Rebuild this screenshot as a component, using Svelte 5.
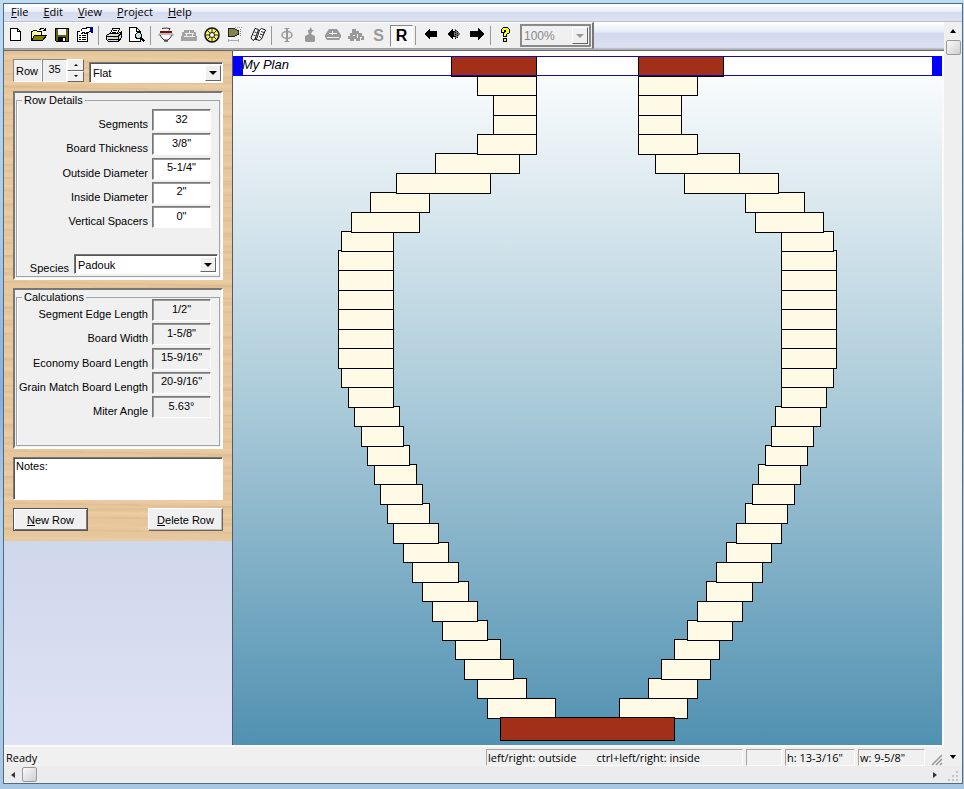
<script lang="ts">
	let row = 35;
	let species = 'Padouk';
	let notes = 'Notes:';

	const menus = ['File', 'Edit', 'View', 'Project', 'Help'];

	const details = [
		{ id: 'segments', label: 'Segments', value: '32' },
		{ id: 'thickness', label: 'Board Thickness', value: '3/8"' },
		{ id: 'outside', label: 'Outside Diameter', value: '5-1/4"' },
		{ id: 'inside', label: 'Inside Diameter', value: '2"' },
		{ id: 'spacers', label: 'Vertical Spacers', value: '0"' }
	];

	const calculations = [
		{ id: 'edge', label: 'Segment Edge Length', value: '1/2"' },
		{ id: 'width', label: 'Board Width', value: '1-5/8"' },
		{ id: 'economy', label: 'Economy Board Length', value: '15-9/16"' },
		{ id: 'grain', label: 'Grain Match Board Length', value: '20-9/16"' },
		{ id: 'miter', label: 'Miter Angle', value: '5.63°' }
	];

	// [outside radius, inside radius] of every ring, top row first
	const radii = [
		[136, 51], [110, 51], [94, 51], [94, 51], [110, 51], [152, 68], [191, 97],
		[217, 158], [236, 168], [246, 194], [249, 194], [249, 194], [249, 194],
		[249, 194], [249, 194], [249, 194], [246, 194], [239, 194], [233, 188],
		[226, 184], [220, 178], [213, 171], [207, 165], [200, 158], [194, 149],
		[184, 139], [175, 129], [165, 119], [155, 110], [145, 100], [132, 87],
		[123, 74], [110, 61], [100, 32]
	];

	const center = 354;
	const rowStep = 19.448;

	// drawn from the bottom up so each ring overlaps the one below
	const rings = radii
		.map(([outer, inner], i) => ({
			y: Math.round(56 + rowStep * i) - 51 + 0.5,
			left: center - outer + 0.5,
			right: center + inner + 0.5,
			width: outer - inner,
			dark: i === 0
		}))
		.reverse();
</script>

<div class="desktop">
	<div class="window">
		<nav class="menu">
			{#each menus as m}
				<button><u>{m[0]}</u>{m.slice(1)}</button>
			{/each}
		</nav>

		<div class="middle">
			<div class="main">
				<div class="toolbar">
					<div class="tools">
						<button aria-label="New">
							<svg viewBox="0 0 16 16"><path d="M2.500 1.500h7l3 3v9h-10z" fill="#fff" stroke="#000" /><path d="M9.500 1.500v3h3" fill="none" stroke="#000" /></svg>
						</button>
						<button aria-label="Open">
							<svg viewBox="0 0 16 16"><path d="M.5 13.500v-9h1l1-1h3l1 1h4v3" fill="#ffff9c" stroke="#000" /><path d="M.5 13.500l3-5h12l-4 5z" fill="#808000" stroke="#000" /><path d="M8.500 2.500l2-1h2l2 2M14.500 1v3M12 3.500h3" fill="none" stroke="#000" /></svg>
						</button>
						<button aria-label="Save">
							<svg viewBox="0 0 16 16"><path d="M1.500 1.500h13v13h-12l-1-1z" fill="#606010" stroke="#000" /><path d="M4 2h8v6H4z" fill="#f4f4f4" /><path d="M4 10h8v4H4z" fill="#000" /><path d="M9 11h2v3H9z" fill="#fff" /></svg>
						</button>
						<button aria-label="Properties">
							<svg viewBox="0 0 16 16"><path d="M.5 4.500h10v10H.5z" fill="#fff" stroke="#000" /><path d="M2 8.500h2M5 8.500h4M2 10.500h2M5 10.500h4M2 12.500h2M5 12.500h4" stroke="#000" /><path d="M3.500 4.500l2-3h3l2-1h3v4l-3 1-2 1-2-1-2 1" fill="#fff" stroke="#000" /><path d="M13 0h3v6h-2V5h-1z" fill="#000090" /></svg>
						</button>
						<span class="sep"></span>
						<button aria-label="Print">
							<svg viewBox="0 0 16 16"><path d="M4.500 6.500l2-5h7l-2 5" fill="#fff" stroke="#000" /><path d="M7 3.500h4M6 5.500h4" stroke="#000" /><path d="M.5 8.500l3-2h9l3-2v6l-3 4h-10l-2-2z" fill="#d8d8d8" stroke="#000" /><path d="M1 9.500h11l3-3M12.500 10v4M2 12.500h10" fill="none" stroke="#000" /><path d="M8 10.500h3" stroke="#d0d000" /></svg>
						</button>
						<button aria-label="Print preview">
							<svg viewBox="0 0 16 16"><path d="M.5.5h7l4 4v10H.5z" fill="#fff" stroke="#000" /><path d="M7.500.5v4h4" fill="none" stroke="#000" /><circle cx="9.500" cy="8.500" r="3" fill="#b9e4e4" stroke="#000" /><path d="M11.500 10.500l4 4" stroke="#000" stroke-width="2" /></svg>
						</button>
						<span class="sep"></span>
						<button aria-label="Bowl">
							<svg class="smooth" viewBox="0 0 16 16"><path d="M4 1.500q4-1 8 0l-1 2M2 8l2 3 2 2h4l2-2 2-3" fill="#fff" stroke="#333" /><path d="M1 8.500V7h14v1.500" fill="none" stroke="#888" /><path d="M2 4h12v2H2z" fill="#7c100c" /><path d="M6 14h4" stroke="#000" stroke-width="1" /></svg>
						</button>
						<button aria-label="Bricks" disabled>
							<svg viewBox="0 0 16 16"><path d="M3 3h10v2h2v4h1v5H0V9h1V5h2z" fill="#a3a3a3" /><path d="M4 6.500h9M3 9.500h11M8.500 4v3M5.500 7v3M11.500 7v3" stroke="#f0f0f0" /></svg>
						</button>
						<button aria-label="Ring">
							<svg class="smooth" viewBox="0 0 16 16"><circle cx="8" cy="8" r="7" fill="#f8f060" stroke="#111" stroke-width="1.500" /><path d="M8 1v14M1 8h14M3 3l10 10M13 3L3 13" stroke="#332" /><circle cx="8" cy="8" r="2.500" fill="#fff" stroke="#111" /></svg>
						</button>
						<button aria-label="Segment">
							<svg viewBox="0 0 16 16"><path d="M1.500 1.500h5l5 2v4l-5 2h-5z" fill="#84844a" stroke="#222" /><path d="M8 .5h8M13.500 2v8" stroke="#999" stroke-dasharray="1 1" /><path d="M1 13.500h11M1.500 12v3M11.500 12v3" stroke="#aaa" /></svg>
						</button>
						<button aria-label="Boards">
							<svg class="smooth" viewBox="0 0 16 16"><path d="M1 11L5 1.500l3.500 1L5 12l-2 1.500zM5 12l2-1 2.500-8 2-1.500 4 1.500-4 9-2 1.500L5 12" fill="#fff" stroke="#111" /><path d="M11 4.500l3 1M10 7l3 1M9 9.500l2 1M4.500 5l2 .5M3.500 8l2 .5" stroke="#222" /></svg>
						</button>
						<span class="sep"></span>
						<button aria-label="Diameter" disabled>
							<svg class="smooth" viewBox="0 0 16 16"><ellipse cx="8" cy="8" rx="5" ry="3.500" fill="none" stroke="#999" stroke-width="1.500" /><path d="M8 2v12" stroke="#999" stroke-width="2" /><path d="M5.500 1.500h5M5.500 14.500h5" stroke="#999" /></svg>
						</button>
						<button aria-label="Vessel" disabled>
							<svg class="smooth" viewBox="0 0 16 16"><path d="M9 0l1 3h2l-2 2-1 2 4 2v5l-1 1H4l-1-1V9l4-2-1-2V3h1z" fill="#999" /></svg>
						</button>
						<button aria-label="Lid" disabled>
							<svg class="smooth" viewBox="0 0 16 16"><path d="M4 2h8l2 3 2 3v2l-2 3H2l-2-3V8l2-3z" fill="#999" /><path d="M4 6.500h8M7.500 4v4M2 10.500h12" stroke="#f0f0f0" /></svg>
						</button>
						<button aria-label="Feature ring" disabled>
							<svg viewBox="0 0 16 16"><path d="M4 2h4v2h3v2h3v3h2v4h-3v-2h-1v3H8v-2H6v2H2v-2H0V9h2V6h2z" fill="#999" /><path d="M9.500 7v4M5 8.500h2M12 10.500h2" stroke="#f0f0f0" /></svg>
						</button>
						<button class="letter" disabled>S</button>
						<button class="letter pressed">R</button>
						<span class="sep"></span>
						<button aria-label="Previous">
							<svg viewBox="0 0 16 16"><path d="M1 7l6-6v3h7v6H7v3z" /></svg>
						</button>
						<button aria-label="Both ways">
							<svg viewBox="0 0 16 16"><path d="M1 7l6-6v3h2v6H7v3z" /><path d="M9 1l5 6-5 6V9H8V5h1z" fill="#777" /><path d="M9.500 3v9M11.500 4v7" stroke="#000" stroke-dasharray="1 1" /></svg>
						</button>
						<button aria-label="Next">
							<svg viewBox="0 0 16 16"><path d="M15 7L9 1v3H1v6h8v3z" /></svg>
						</button>
						<span class="sep"></span>
						<button aria-label="Help">
							<svg viewBox="0 0 16 16"><path d="M3.500 5.500v-3l2-2h4l2 2v3l-3 2v2h-3v-3l2-2v-1h-1v2zM5.500 11.500h3v3h-3z" fill="#ffff20" stroke="#000" /></svg>
						</button>
						<label class="combo zoom">
							<select disabled aria-label="Zoom"><option>100%</option></select>
							<span class="drop"></span>
						</label>
					</div>
				</div>

				<div class="workspace">
					<aside class="side">
						<div class="wood">
							<div class="row-line">
								<div class="row-box">
									<label for="row">Row</label>
									<input id="row" value={row} />
									<div class="spin">
										<button aria-label="Next row" on:click={() => row++}><i class="tri up"></i></button>
										<button aria-label="Previous row" on:click={() => row--}><i class="tri down"></i></button>
									</div>
								</div>
								<label class="combo kind">
									<select aria-label="Row type"><option>Flat</option></select>
									<span class="drop"></span>
								</label>
							</div>

							<div class="group">
								<fieldset>
									<legend>Row Details</legend>
									<div class="fields details">
										{#each details as f}
											<div class="field">
												<label for={f.id}>{f.label}</label>
												<input id={f.id} value={f.value} />
											</div>
										{/each}
									</div>
									<div class="species">
										<label for="species">Species</label>
										<div class="combo">
											<select id="species" bind:value={species}><option>Padouk</option></select>
											<span class="drop"></span>
										</div>
									</div>
								</fieldset>
							</div>

							<div class="group">
								<fieldset>
									<legend>Calculations</legend>
									<div class="fields calc">
										{#each calculations as f}
											<div class="field">
												<label for={f.id}>{f.label}</label>
												<input id={f.id} value={f.value} readonly />
											</div>
										{/each}
									</div>
								</fieldset>
							</div>

							<textarea aria-label="Notes" bind:value={notes}></textarea>

							<div class="actions">
								<button class="btn default"><u>N</u>ew Row</button>
								<button class="btn"><u>D</u>elete Row</button>
							</div>
						</div>
					</aside>

					<div class="canvas">
						<svg viewBox="0 0 709 694" role="img" aria-label="Vessel profile">
							<rect x="0" y="5" width="709" height="20" fill="#fff" />
							{#each rings as r}
								<g class:dark={r.dark} class="ring">
									<rect x={r.left} y={r.y} width={r.width} height="20" />
									<rect x={r.right} y={r.y} width={r.width} height="20" />
								</g>
							{/each}
							<g class="ring dark">
								<rect x="267.500" y="666.500" width="174" height="23" />
							</g>
							<path d="M0 5.500h709M0 24.500h709" stroke="#1a0aa0" />
							<path d="M0 5h10v20H0zM699 5h10v20h-10z" fill="#0000fa" />
							<text x="9" y="18">My Plan</text>
						</svg>
					</div>
				</div>

				<footer class="status">
					<span class="ready">Ready</span>
					<span class="pane hint"><span>left/right: outside</span><span>ctrl+left/right: inside</span></span>
					<span class="pane blank"></span>
					<span class="pane height">h: 13-3/16"</span>
					<span class="pane width">w: 9-5/8"</span>
					<svg class="grip" viewBox="0 0 16 16"><path d="M4 15L14 5M8 15l6-6M12 15l2-2" stroke="#999" stroke-width="1.500" /></svg>
				</footer>
			</div>

			<div class="vscroll">
				<button aria-label="Scroll up"><i class="tri up big"></i></button>
				<span class="thumb"></span>
				<span class="track"></span>
				<button aria-label="Scroll down"><i class="tri down big"></i></button>
			</div>
		</div>

		<div class="hscroll">
			<button aria-label="Scroll left"><i class="tri left"></i></button>
			<span class="thumb"></span>
			<span class="track"></span>
			<button aria-label="Scroll right"><i class="tri right"></i></button>
			<svg class="corner" viewBox="0 0 18 17"><path d="M12 5h2v2h-2zM12 9h2v2h-2zM12 13h2v2h-2zM8 9h2v2H8zM8 13h2v2H8zM4 13h2v2H4z" fill="#c4c4c4" /></svg>
		</div>
	</div>
</div>

<style>
	:global(body) {
		background: #adc9e6;
	}

	.desktop {
		display: flex;
		min-height: 100vh;
		box-sizing: border-box;
		padding: 3px 1px 5px 3px;
		background: linear-gradient(180deg, #bfdcf2 0%, #a9c9e8 30%, #86aeda 50%, #b4cfe8 65%, #a9c6e2 100%);
		font-family: 'Liberation Sans', Arial, sans-serif;
		font-size: 11px;
		color: #000;
	}

	.window {
		flex: 1;
		min-width: 0;
		display: flex;
		flex-direction: column;
		border: 1px solid #4d6c86;
		background: #f0f0f0;
	}

	button,
	input,
	select,
	textarea {
		font: inherit;
		color: inherit;
		margin: 0;
		border-radius: 0;
		box-sizing: border-box;
		outline: none;
	}

	button {
		padding: 0;
		border: 0;
		background: none;
	}

	.menu {
		display: flex;
		gap: 15px;
		height: 18px;
		box-sizing: border-box;
		padding: 0 0 2px 7px;
		background: linear-gradient(180deg, #fff 0%, #e9edf8 45%, #d5dbee 50%, #dde3f3 100%);
		border-bottom: 1px solid #b9bfcd;
		font-family: 'Open Sans', 'Noto Sans', sans-serif;
		font-size: 11px;
	}

	.middle {
		flex: 1;
		display: flex;
	}

	.main {
		flex: 1;
		min-width: 0;
		display: flex;
		flex-direction: column;
	}

	.toolbar {
		display: flex;
		height: 28px;
		box-sizing: border-box;
		padding-bottom: 1px;
		background: linear-gradient(180deg, #fff 0%, #e8ebf7 35%, #d3d9ed 40%, #dbe1f2 90%, #a0a0a0 100%);
	}

	.tools {
		display: flex;
		align-items: center;
		box-sizing: border-box;
		background: #f0f0f0;
		border-top: 1px solid #fff;
		border-bottom: 1px solid #a0a0a0;
		border-right: 2px solid #777;
	}

	.tools button {
		width: 23px;
		height: 22px;
		padding-bottom: 2px;
		display: flex;
		align-items: center;
		justify-content: center;
	}

	.tools svg {
		width: 16px;
		height: 16px;
		flex: none;
		shape-rendering: crispEdges;
	}

	.tools .smooth {
		shape-rendering: auto;
	}

	.tools .letter {
		padding: 0;
		font-size: 16px;
		font-weight: bold;
	}

	.tools .letter:disabled {
		color: #999;
	}

	.tools .pressed {
		background: #f8f8f8;
		border: 1px solid #888;
		border-right-color: #fff;
		border-bottom-color: #fff;
	}

	.sep {
		width: 1px;
		height: 19px;
		margin: 0 3px 0 2px;
		background: #999;
	}

	.combo {
		display: flex;
		height: 20px;
		box-sizing: border-box;
		background: #fff;
		border: 1px solid #777;
		border-right-color: #fff;
		border-bottom-color: #fff;
		box-shadow: inset 1px 1px #555;
		padding: 2px 1px 1px 2px;
	}

	.combo select {
		flex: 1;
		min-width: 0;
		appearance: none;
		border: 0;
		background: transparent;
		padding: 0 1px;
	}

	.drop {
		width: 16px;
		box-sizing: border-box;
		display: flex;
		align-items: center;
		justify-content: center;
		background: #f0f0f0;
		border: 1px solid #fff;
		border-right-color: #666;
		border-bottom-color: #666;
	}

	.drop::after {
		content: '';
		border: 4px solid transparent;
		border-top-color: #000;
		border-bottom: 0;
	}

	.zoom {
		width: 71px;
		height: 23px;
		margin: 0 1px 0 3px;
		background: #f0f0f0;
		border: 2px solid #8a8a8a;
		box-shadow: none;
		padding: 1px;
	}

	.zoom select {
		color: #888;
		opacity: 1;
		font-size: 12px;
	}

	.zoom .drop::after {
		border-top-color: #999;
	}

	.workspace {
		flex: 1;
		display: flex;
		border-top: 1px solid #6b6b6b;
	}

	.side {
		width: 228px;
		flex: none;
		border-right: 1px solid #555a66;
		background: linear-gradient(180deg, #cfd7ea 70%, #dfe2f4 100%);
	}

	.wood {
		display: flex;
		flex-direction: column;
		gap: 8px;
		padding: 8px 9px 10px;
		background:
			repeating-linear-gradient(181deg, rgba(190, 130, 80, 0.1) 0 1px, transparent 2px 7px, rgba(255, 225, 190, 0.25) 9px, transparent 13px),
			repeating-linear-gradient(179deg, rgba(180, 125, 80, 0.08) 0 2px, transparent 4px 17px),
			#e6c69b;
	}

	.row-line {
		display: flex;
		justify-content: space-between;
		align-items: flex-end;
		height: 24px;
	}

	.row-box {
		display: flex;
		height: 23px;
		background: #f0f0f0;
		align-self: flex-start;
	}

	.row-box label,
	.row-box input {
		box-sizing: border-box;
		border: 1px solid #888;
		border-right-color: #fff;
		border-bottom-color: #fff;
	}

	.row-box label {
		width: 29px;
		padding: 5px 0 0 2px;
	}

	.row-box input {
		width: 25px;
		padding: 0 0 3px;
		text-align: center;
		background: #f0f0f0;
	}

	.spin {
		width: 17px;
		display: flex;
		flex-direction: column;
	}

	.spin button {
		flex: 1;
		display: flex;
		align-items: center;
		justify-content: center;
		border: 1px solid #fff;
		border-right-color: #666;
		border-bottom-color: #666;
		background: #f0f0f0;
	}

	.tri {
		border: 2px solid transparent;
	}

	.up {
		border-bottom-color: #000;
		border-top: 0;
	}

	.down {
		border-top-color: #000;
		border-bottom: 0;
	}

	.left {
		border-width: 3px;
		border-right: 4px solid #333;
		border-left: 0;
	}

	.right {
		border-width: 3px;
		border-left: 4px solid #333;
		border-right: 0;
	}

	.up.big {
		border-width: 0 3px 4px;
	}

	.down.big {
		border-width: 4px 3px 0;
	}

	.kind {
		width: 134px;
		height: 21px;
	}

	.group {
		background: #f0f0f0;
		border: 2px solid #777;
		border-right-color: #fff;
		border-bottom-color: #fff;
		padding: 1px;
	}

	fieldset {
		margin: 0;
		padding: 0 5px 2px;
		min-width: 0;
		border: 1px solid #a0a4aa;
		box-shadow: inset 1px 0 #fff;
	}

	legend {
		padding: 0 2px;
		height: 13px;
		line-height: 13px;
	}

	.fields {
		display: flex;
		flex-direction: column;
		justify-content: space-between;
		height: 119px;
		margin-right: 3px;
	}

	.details {
		margin-top: 2px;
		margin-bottom: 26px;
	}

	.calc {
		margin-top: -5px;
		margin-bottom: 25px;
	}

	.field {
		display: flex;
		justify-content: flex-end;
		gap: 4px;
		height: 22px;
	}

	.field label {
		align-self: flex-end;
		line-height: 14px;
		white-space: nowrap;
	}

	.field input {
		width: 59px;
		text-align: center;
		padding: 0 0 3px;
		border: 1px solid #777;
		border-right-color: #fff;
		border-bottom-color: #fff;
		box-shadow: inset 1px 1px #999;
		background: #fff;
	}

	.field input[readonly] {
		background: #f0f0f0;
	}

	.species {
		display: flex;
		justify-content: flex-end;
		align-items: flex-end;
		gap: 5px;
		margin-right: -4px;
	}

	.species .combo {
		width: 144px;
	}

	textarea {
		height: 43px;
		resize: none;
		padding: 2px;
		border: 1px solid #777;
		border-right-color: #fff;
		border-bottom-color: #fff;
		box-shadow: inset 1px 1px #555;
		background: #fff;
		overflow: hidden;
	}

	.actions {
		display: flex;
		justify-content: space-between;
	}

	.btn {
		width: 75px;
		height: 23px;
		background: #f0f0f0;
		border: 1px solid #fff;
		border-right-color: #666;
		border-bottom-color: #666;
		box-shadow: inset -1px -1px #bbb;
	}

	.default {
		border-color: #555;
		box-shadow: inset 1px 1px #fff, inset -1px -1px #777;
	}

	.canvas {
		flex: 1;
		min-width: 0;
		background: linear-gradient(180deg, #fff 0%, #a8c9d8 52%, #5191b1 100%);
		border-right: 2px solid #fafafa;
	}

	.canvas svg {
		display: block;
		width: 100%;
		height: 100%;
	}

	.ring rect {
		fill: #fefae6;
		stroke: #000;
	}

	.ring.dark rect {
		fill: #a23019;
	}

	.canvas text {
		font-size: 13px;
		font-style: italic;
	}

	.status {
		display: flex;
		align-items: flex-end;
		gap: 3px;
		height: 21px;
		box-sizing: border-box;
		border-top: 2px solid #fafafa;
		font-family: 'Open Sans', 'Noto Sans', sans-serif;
		font-size: 11px;
		line-height: 16px;
	}

	.ready {
		flex: 1;
		padding-left: 2px;
	}

	.pane {
		height: 17px;
		box-sizing: border-box;
		padding-left: 1px;
		border: 1px solid #a5a5a5;
		border-right-color: #fff;
		border-bottom-color: #fff;
		white-space: nowrap;
	}

	.hint {
		display: flex;
		gap: 20px;
		width: 257px;
	}

	.blank {
		width: 36px;
	}

	.height {
		width: 70px;
	}

	.width {
		width: 67px;
	}

	.grip {
		width: 16px;
		height: 16px;
	}

	.vscroll {
		width: 18px;
		display: flex;
		flex-direction: column;
		align-items: center;
		background: #efefef;
	}

	.vscroll button {
		width: 18px;
		height: 18px;
		display: flex;
		align-items: center;
		justify-content: center;
	}

	.thumb {
		width: 15px;
		height: 15px;
		box-sizing: border-box;
		border: 1px solid #999;
		border-radius: 2px;
		background: linear-gradient(135deg, #fafafa, #cfcfcf);
	}

	.track {
		flex: 1;
	}

	.hscroll {
		display: flex;
		align-items: center;
		height: 17px;
		background: #ececec;
	}

	.hscroll button {
		width: 18px;
		height: 17px;
		display: flex;
		align-items: center;
		justify-content: center;
	}

	.corner {
		width: 18px;
		height: 17px;
	}
</style>
